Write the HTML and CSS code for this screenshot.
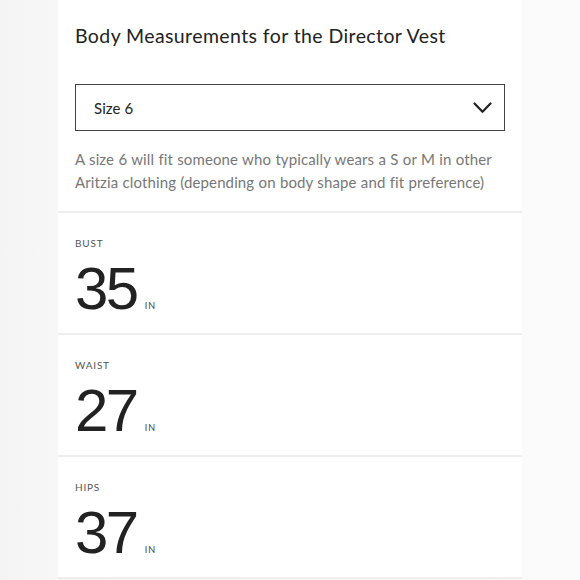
FILE: index.html
```html
<!DOCTYPE html>
<html lang="en">
<head>
<meta charset="utf-8">
<title>Body Measurements</title>
<link rel="stylesheet" href="styles.css">
</head>
<body>
<div class="page">
  <section class="panel">
    <div class="header">
      <h1 class="title">Body Measurements for the Director Vest</h1>
      <div class="select">
        <span class="select-label">Size 6</span>
        <svg class="chevron" width="19" height="12" viewBox="0 0 19 12" aria-hidden="true">
          <path d="M1.5 1.5 L9.5 9.8 L17.5 1.5" fill="none" stroke="#222" stroke-width="2.2" stroke-linecap="round" stroke-linejoin="round"/>
        </svg>
      </div>
      <p class="desc">A size 6 will fit someone who typically wears a S or M in other Aritzia clothing (depending on body shape and fit preference)</p>
    </div>
    <div class="row">
      <div class="label">BUST</div>
      <div class="measure"><span class="num">35</span><span class="unit">IN</span></div>
    </div>
    <div class="row">
      <div class="label">WAIST</div>
      <div class="measure"><span class="num">27</span><span class="unit">IN</span></div>
    </div>
    <div class="row">
      <div class="label">HIPS</div>
      <div class="measure"><span class="num">37</span><span class="unit">IN</span></div>
    </div>
    <div class="row-end"></div>
  </section>
</div>
</body>
</html>
```
FILE: styles.css
```css
html, body {
  margin: 0;
  padding: 0;
}
body {
  background: linear-gradient(90deg, #f4f4f4 0%, #f7f7f7 10%, #fbfbfb 100%);
  font-family: "Lato", "Noto Sans", sans-serif;
  height: 580px;
  overflow: hidden;
}
.page {
  display: flex;
}
.panel {
  margin-left: 58px;
  width: 464px;
  background: #ffffff;
}
.header {
  padding: 24px 17px 17px;
}
.title {
  margin: 0;
  font-size: 19.5px;
  line-height: 24px;
  font-weight: 400;
  color: #222;
  letter-spacing: 0.4px;
}
.select {
  margin-top: 36px;
  height: 47px;
  box-sizing: border-box;
  border: 1.5px solid #444;
  display: flex;
  align-items: center;
  justify-content: space-between;
  padding: 0 12px 0 18px;
}
.select-label {
  font-size: 15px;
  color: #222;
  letter-spacing: 0.1px;
}
.chevron {
  display: block;
}
.desc {
  margin: 17px 0 0;
  font-size: 15px;
  line-height: 23px;
  color: #777;
  letter-spacing: 0.12px;
  word-spacing: 0.3px;
}
.row {
  box-sizing: border-box;
  height: 122px;
  border-top: 2px solid #eeeeee;
  padding: 24px 17px 0;
}
.label {
  font-size: 10px;
  line-height: 12px;
  letter-spacing: 0.8px;
  color: #555;
}
.measure {
  margin-top: 10px;
  display: flex;
  align-items: baseline;
}
.num {
  font-family: "Liberation Sans", Arial, sans-serif;
  font-size: 60px;
  line-height: 60px;
  color: #222;
  letter-spacing: -2.5px;
}
.unit {
  margin-left: 8px;
  font-size: 9px;
  letter-spacing: 1px;
  color: #444;
}
.row-end {
  border-top: 2px solid #eeeeee;
}
```
